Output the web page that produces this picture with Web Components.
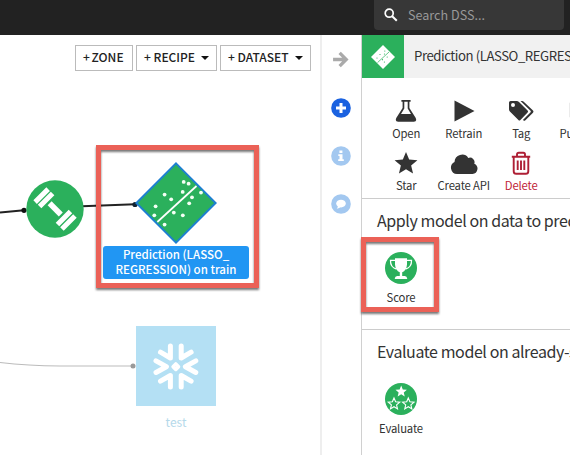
<!DOCTYPE html>
<html lang="en">
<head>
<meta charset="utf-8">
<title>DSS Flow</title>
<style>
html,body{margin:0;height:100%;overflow:hidden;background:#fff}
body{font-family:"Noto Sans CJK SC","Noto Sans",sans-serif;color:#333}
</style>
</head>
<body>
<dss-app></dss-app>
<script>
const define = (name, html, setup) => customElements.define(name, class extends HTMLElement {
  connectedCallback() {
    if (this.shadowRoot) return;
    const root = this.attachShadow({ mode: 'open' });
    const t = document.createElement('template');
    t.innerHTML = html;
    root.append(t.content.cloneNode(true));
    if (setup) setup(this, root);
  }
});

const star = (cx, cy, r, k = 0.45) => Array.from({ length: 10 }, (_, i) => {
  const a = Math.PI * (i / 5 - 0.5), q = i % 2 ? r * k : r;
  return (cx + q * Math.cos(a)).toFixed(2) + ',' + (cy + q * Math.sin(a)).toFixed(2);
}).join(' ');

const ICONS = {
  search: ['0 0 14 14', '<circle cx="5.2" cy="5.2" r="4" fill="none" stroke="#fff" stroke-width="1.7"/><path d="M8.2 8.2 12.8 12.8" stroke="#fff" stroke-width="2"/>'],
  arrow: ['0 0 16 16', '<path d="M1 8H12.5M7.2 1.8 13.4 8 7.2 14.2" fill="none" stroke="#aaa" stroke-width="3.1"/>'],
  plus: ['0 0 20 20', '<circle cx="10" cy="10" r="9.8" fill="#1b62e0"/><path d="M10 5V15M5 10H15" stroke="#fff" stroke-width="3"/>'],
  info: ['0 0 20 20', '<circle cx="10" cy="10" r="9.8" fill="#a3c8f0"/><path d="M8.4 4.4H11.4V7H8.4ZM7.3 8.2H11.5V13.2H12.8V15H7.2V13.2H8.5V10H7.3Z" fill="#fff"/>'],
  chat: ['0 0 20 20', '<circle cx="10" cy="10" r="9.8" fill="#a3c8f0"/><ellipse cx="10" cy="9.6" rx="4.8" ry="3.9" fill="#fff"/><path d="M7 11.5Q7 13.5 5.7 14.8Q8.7 14.6 10 12.6Z" fill="#fff"/>'],
  flask: ['0 0 22 24', '<path d="M6.4 1H15.6V2.8H14.4V9L20.6 18.8Q22.4 22.8 18.8 22.8H3.2Q-.4 22.8 1.4 18.8L7.6 9V2.8H6.4ZM9.3 2.8V9.5L6 14.9H16L12.7 9.5V2.8Z" fill="#333" fill-rule="evenodd"/>'],
  play: ['0 0 22 24', '<path d="M1.5 1.6 21.5 12 1.5 22.4Z" fill="#333"/>'],
  tag: ['0 0 26 24', '<path d="M1 3.6Q1 2 2.6 2H8.6Q10 2 11 3L19.6 11.4Q20.6 12.5 19.6 13.5L12.4 21Q11.4 22 10.4 21L1.9 12.6Q1 11.6 1 10.2ZM5 3.9A2 2 0 1 0 5 7.9A2 2 0 1 0 5 3.9Z" fill="#333" fill-rule="evenodd"/><path d="M12.5 2H14Q15.1 2 16 3L25 11.6Q26 12.6 25 13.7L17.4 21.2Q16.2 22.4 14.9 21L22.6 13.2Q23.2 12.5 22.5 11.8Z" fill="#333"/>'],
  publish: ['0 0 22 24', '<path d="M1 3H21V19H1Z" fill="#333"/>'],
  star: ['0 0 24 24', `<polygon points="${star(12, 12.9, 12)}" fill="#333"/>`],
  cloud: ['0 0 28 24', '<path d="M7 23A6.4 6.4 0 0 1 4.5 10.9A7.6 7.6 0 0 1 18.3 6.9A4.6 4.6 0 0 1 24.3 12.7A5.4 5.4 0 0 1 22.5 23Z" fill="#333"/>'],
  trash: ['0 0 20 24', '<path d="M.8 5.8H19.2M6 5.8V3.4Q6 1.8 7.7 1.8H12.3Q14 1.8 14 3.4V5.8M2.7 6V20.2Q2.7 22.8 5.2 22.8H14.8Q17.3 22.8 17.3 20.2V6M6.7 9.5V19M10 9.5V19M13.3 9.5V19" fill="none" stroke="#ae1f35" stroke-width="1.9"/>'],
  trophy: ['0 0 32 32', '<circle cx="16" cy="16" r="16" fill="#2bb05c"/><path d="M10 6.3H22V12.5Q21.5 18.5 17.2 20.3V24H19.8Q22 24.2 22.2 26.5V27H9.8V26.5Q10 24.2 12.2 24H14.8V20.3Q10.5 18.5 10 12.5Z" fill="#fff"/><path d="M10 8.4H5.5Q5.2 15.5 11.5 17M22 8.4H26.5Q26.8 15.5 20.5 17" fill="none" stroke="#fff" stroke-width="1.3"/>'],
  stars: ['0 0 32 32', `<circle cx="16" cy="16" r="16" fill="#2bb05c"/><polygon points="${star(16.2, 8.6, 6)}" fill="#fff"/><g fill="none" stroke="#fff" stroke-width="1.1"><polygon points="${star(9, 21, 6)}"/><polygon points="${star(23.3, 21, 6)}"/></g>`],
  model: ['0 0 24 24', '<path d="M12 0 24 12 12 24 0 12Z" fill="#fff"/><path d="M6.5 17.6 18 7" stroke="#2bb05c" stroke-width=".7"/><g fill="#2bb05c"><circle cx="9" cy="9.5" r=".6"/><circle cx="13.8" cy="6" r=".6"/><circle cx="6" cy="13" r=".6"/><circle cx="11.5" cy="14.7" r=".6"/><circle cx="16.2" cy="12" r=".6"/><circle cx="13.4" cy="17" r=".6"/><circle cx="13.5" cy="9" r=".6"/></g>'],
  dumbbell: ['0 0 58 58', '<circle cx="29" cy="29" r="28.7" fill="#2bb05c"/><g transform="rotate(45 29 29)" fill="#fff"><path d="M21.2 26H37V31.6H21.2Z"/><path d="M13.9 19.8H18.9V38.2H13.9ZM7.6 19.8H12.6V38.2H7.6ZM39.2 19.8H44.2V38.2H39.2ZM45.5 19.8H50.5V38.2H45.5Z"/></g>'],
  prediction: ['0 0 82 82', '<path d="M41 1.4 80.6 41 41 80.6 1.4 41Z" fill="#2bb05c" stroke="#1d7fd0" stroke-width="2"/><path d="M22.3 60 61.5 24" stroke="#fff" stroke-width="1.7"/><g fill="#f4fff4"><circle cx="48.7" cy="19.9" r="1.9"/><circle cx="53.6" cy="21.7" r="1.9"/><circle cx="47.7" cy="29.9" r="1.9"/><circle cx="66" cy="30.6" r="1.9"/><circle cx="57" cy="35.3" r="1.9"/><circle cx="54.2" cy="41.3" r="1.9"/><circle cx="29.6" cy="32.6" r="1.9"/><circle cx="36.2" cy="37.3" r="1.9"/><circle cx="20.6" cy="44.3" r="1.9"/><circle cx="19.3" cy="53.3" r="1.9"/><circle cx="38.8" cy="50.6" r="1.9"/><circle cx="47.8" cy="53.3" r="1.9"/><circle cx="29.6" cy="62.6" r="1.9"/></g>'],
  snowflake: ['0 0 80 80', '<rect width="80" height="80" fill="#b4e0f4"/><g fill="none" stroke="#fff" stroke-width="5" stroke-linecap="round" stroke-linejoin="round"><path d="M34.4 20V32L24.5 26.2M45.2 20V32L55.1 26.2M34.4 61V49.5L24.5 55.2M45.2 61V49.5L55.1 55.2M20 34.8 30.4 40.7 20 46.5M59.8 34.8 49.4 40.7 59.8 46.5"/><path d="M39.8 38 42.5 40.7 39.8 43.4 37.1 40.7Z" stroke-width="3.6"/></g>']
};

define('dss-icon', '<style>:host{display:block;flex:none}svg{display:block;width:100%;height:100%}</style><div id="i" style="height:100%"></div>', (el, root) => {
  const [box, body] = ICONS[el.getAttribute('name')];
  el.style.width = el.getAttribute('w') + 'px';
  el.style.height = el.getAttribute('h') + 'px';
  root.getElementById('i').innerHTML = `<svg viewBox="${box}">${body}</svg>`;
});

define('dss-topbar', `<style>
:host{display:flex;height:35px;background:#222;justify-content:flex-end;box-sizing:border-box;padding-right:6px;flex:none}
.box{width:190px;height:30px;background:#373737;border-radius:0 0 4px 4px;display:flex;align-items:center;box-sizing:border-box;padding-left:10px;gap:10px}
span{font-size:12.6px;line-height:20px;color:#999}
</style><div class="box"><dss-icon name="search" w="14" h="14"></dss-icon><span><slot></slot></span></div>`);

define('dss-button', `<style>
:host{display:flex;box-sizing:border-box;height:26px;border:1px solid #bbb;align-items:center;padding:0 0 2px 7px;font-size:12px;font-weight:500;line-height:20px;color:#222;background:#fff;white-space:nowrap}
i{display:none;margin:2px 0 0 6px;border:4px solid transparent;border-top-color:#111;border-bottom:0}
:host([menu]) i{display:block}
</style><slot></slot><i></i>`, el => { el.style.width = el.getAttribute('w') + 'px'; });

define('dss-node', `<style>
:host{position:absolute;display:flex;flex-direction:column;align-items:center}
.l{font-size:12px;line-height:15px;text-align:center;white-space:nowrap}
:host([selected]) .l{background:#2196f3;color:#fff;border-radius:3px;box-sizing:border-box;width:146px;height:33px;padding-top:1px;margin-top:2px;font-weight:500;font-size:11.5px}
:host([faded]) .l{color:#b5d9ea;margin-top:8px}
</style><slot name="icon"></slot><div class="l"><slot></slot></div>`);

define('dss-callout', `<style>:host{position:absolute;display:block;box-sizing:border-box;border:5px solid #eb6157;filter:drop-shadow(0 2px 1px #0008)}</style>`);

define('dss-flow', `<style>
:host{display:block;position:relative;width:320px;height:420px;background:#fff}
.bar{display:flex;justify-content:flex-end;gap:3px;padding:10px 9px 0 0}
svg.e{position:absolute;inset:0}
</style>
<div class="bar"><dss-button w="58"><span style="word-spacing:-1px">+ ZONE</span></dss-button><dss-button w="81" menu>+ RECIPE</dss-button><dss-button w="91" menu>+ DATASET</dss-button></div>
<svg class="e" width="320" height="420"><path d="M0 177.5 24 175.3M82 171.2 135 169.3" stroke="#222" stroke-width="1.9"/><circle cx="24" cy="175.3" r="2.6" fill="#111"/><circle cx="135" cy="169.5" r="2.6" fill="#123"/><path d="M0 327.5Q28 331 60 331H133" fill="none" stroke="#bbb" stroke-width="1.2"/><circle cx="133" cy="331" r="2.5" fill="#999"/></svg>
<dss-node style="left:26px;top:144.5px"><dss-icon slot="icon" name="dumbbell" w="58" h="58"></dss-icon></dss-node>
<dss-node selected style="left:103px;top:126.5px"><dss-icon slot="icon" name="prediction" w="82" h="82"></dss-icon>Prediction (LASSO_<br>REGRESSION) on train</dss-node>
<dss-node faded style="left:136px;top:291px"><dss-icon slot="icon" name="snowflake" w="80" h="80"></dss-icon>test</dss-node>
<dss-callout style="left:96px;top:110px;width:163px;height:143px"></dss-callout>`);

define('dss-rail', `<style>
:host{display:flex;flex-direction:column;align-items:center;box-sizing:border-box;width:42px;border-left:2px solid #eee;border-right:1px solid #d0d0d0;padding-top:16px;padding-right:2px;gap:28px;background:#fff}
dss-icon:first-of-type{margin-bottom:2px}
</style><dss-icon name="arrow" w="17" h="17"></dss-icon><dss-icon name="plus" w="20" h="20"></dss-icon><dss-icon name="info" w="20" h="20"></dss-icon><dss-icon name="chat" w="20" h="20"></dss-icon>`);

define('dss-action', `<style>
:host{display:flex;flex-direction:column;align-items:center;width:57.5px;flex:none;font-size:11.3px;letter-spacing:-.15px;line-height:16px;white-space:nowrap;color:#333}
.i{display:flex;align-items:center;justify-content:center}
:host([danger]){color:#bf2438}
:host([large]){width:48px}
:host([large]) .i{padding-bottom:3px}
.l{margin-top:2px}
</style><div class="i"><slot name="icon"></slot></div><div class="l"><slot></slot></div>`);

define('dss-section', `<style>
:host{display:block;box-sizing:border-box;height:131px;border-top:1px solid #ccc;padding:9px 0 0 15px}
h2{margin:0 0 20px;font-size:16px;font-weight:400;letter-spacing:-.42px;line-height:24px;white-space:nowrap;color:#333}
</style><h2><slot name="title"></slot></h2><slot></slot>`);

define('dss-panel', `<style>
:host{display:block;position:relative;flex:1;min-width:0;overflow:hidden;background:#fff}
header{display:flex;height:43px;background:#f1f1f1;align-items:center;font-size:13.2px;letter-spacing:-.45px;line-height:20px;white-space:nowrap;color:#333}
header span{padding-bottom:2px}
.sq{width:42px;height:43px;background:#2bb05c;display:grid;place-items:center;flex:none;margin-right:10px}
.acts{display:grid;grid-template-columns:repeat(4,57.5px);align-content:start;row-gap:10px;padding:21px 0 0 15.5px;height:99px}
</style>
<header><div class="sq"><dss-icon name="model" w="24" h="24"></dss-icon></div><span>Prediction (LASSO_REGRESSION)</span></header>
<div class="acts">
<dss-action><dss-icon slot="icon" name="flask" w="22" h="24"></dss-icon>Open</dss-action>
<dss-action><dss-icon slot="icon" name="play" w="22" h="24"></dss-icon>Retrain</dss-action>
<dss-action><dss-icon slot="icon" name="tag" w="26" h="24"></dss-icon>Tag</dss-action>
<dss-action><dss-icon slot="icon" name="publish" w="20" h="24"></dss-icon>Publish</dss-action>
<dss-action><dss-icon slot="icon" name="star" w="24" h="24"></dss-icon>Star</dss-action>
<dss-action><dss-icon slot="icon" name="cloud" w="28" h="24"></dss-icon>Create API</dss-action>
<dss-action danger><dss-icon slot="icon" name="trash" w="20" h="24"></dss-icon>Delete</dss-action>
</div>
<dss-section><span slot="title">Apply model on data to predict</span><dss-action large><dss-icon slot="icon" name="trophy" w="32" h="32"></dss-icon>Score</dss-action></dss-section>
<dss-section><span slot="title">Evaluate model on already-scored</span><dss-action large><dss-icon slot="icon" name="stars" w="32" h="32"></dss-icon>Evaluate</dss-action></dss-section>
`);

define('dss-app', `<style>
:host{display:flex;flex-direction:column;position:relative;width:570px;height:455px;overflow:hidden}
main{display:flex;flex:1;min-height:0}
dss-flow{flex:none}
</style><dss-topbar>Search DSS...</dss-topbar><main><dss-flow></dss-flow><dss-rail></dss-rail><dss-panel></dss-panel></main>
<dss-callout style="left:361px;top:237px;width:78px;height:75px"></dss-callout>`);
</script>
</body>
</html>
